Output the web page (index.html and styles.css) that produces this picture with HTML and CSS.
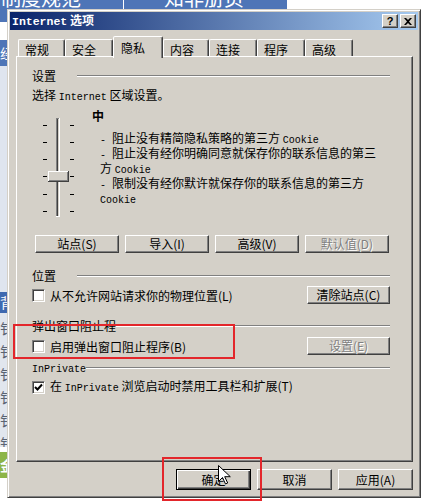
FILE: index.html
```html
<!DOCTYPE html>
<html lang="zh-CN">
<head>
  <meta charset="UTF-8">
  <meta name="viewport" content="width=device-width, initial-scale=1.0">
  <title>Internet 选项</title>
  <link rel="stylesheet" href="styles.css">
</head>
<body>

  <!-- page behind the dialog -->
  <div class="top-band">
    <span class="band-text band-left">制度规范</span>
    <span class="band-sep"></span>
    <span class="band-text band-right">知非册页</span>
  </div>

  <div class="desk">
    <div class="side-strip">
      <div class="strip s-blue-top"></div>
      <div class="strip s-white-a"></div>
      <div class="strip s-blue-mid">经</div>
      <div class="strip s-light"></div>
      <div class="strip s-blue-low">背</div>
      <div class="strip s-rows">钅<br>钅<br>钅<br>钅<br>钅<br>钅</div>
      <div class="strip s-white-b"></div>
      <div class="strip s-green">金</div>
    </div>

    <div class="dialog">
      <div class="title-bar">
        <span class="title-text"><span class="en-bold">Internet</span> 选项</span>
        <div class="cap-buttons">
          <span class="cap-btn cap-help">?</span>
          <span class="cap-btn">
            <svg width="8" height="7" viewBox="0 0 8 7"><path d="M0 0h2l2 2 2-2h2L5 3.5 8 7H6L4 5 2 7H0l3-3.5z" fill="#000"/></svg>
          </span>
        </div>
      </div>

      <div class="dialog-body">
        <div class="tabs">
          <div class="tab w47">常规</div>
          <div class="tab w48">安全</div>
          <div class="tab active">隐私</div>
          <div class="tab w46">内容</div>
          <div class="tab w48">连接</div>
          <div class="tab w48">程序</div>
          <div class="tab w48">高级</div>
        </div>

        <div class="panel">
          <div class="group-head"><span class="group-label">设置</span><span class="group-line"></span></div>
          <div class="zone-line">选择 <span class="en">Internet</span> 区域设置。</div>

          <div class="privacy">
            <svg class="slider" width="34" height="104" viewBox="0 0 34 104">
              <g fill="#000">
                <rect x="1" y="10" width="4" height="1"/><rect x="28" y="10" width="4" height="1"/>
                <rect x="1" y="27" width="4" height="1"/><rect x="28" y="27" width="4" height="1"/>
                <rect x="1" y="44" width="4" height="1"/><rect x="28" y="44" width="4" height="1"/>
                <rect x="1" y="61" width="4" height="1"/><rect x="28" y="61" width="4" height="1"/>
                <rect x="1" y="79" width="4" height="1"/><rect x="28" y="79" width="4" height="1"/>
                <rect x="1" y="96" width="4" height="1"/><rect x="28" y="96" width="4" height="1"/>
              </g>
              <rect x="14" y="3" width="4" height="99" fill="#fff"/>
              <rect x="14" y="3" width="3" height="98" fill="#808080"/>
              <rect x="15" y="4" width="2" height="97" fill="#404040"/>
              <rect x="16" y="4" width="1" height="97" fill="#d4d0c8"/>
              <rect x="6" y="56" width="21" height="11" fill="#404040"/>
              <rect x="6" y="56" width="20" height="10" fill="#fff"/>
              <rect x="7" y="57" width="19" height="9" fill="#808080"/>
              <rect x="7" y="57" width="18" height="8" fill="#d4d0c8"/>
            </svg>
            <div class="level">
              <div class="level-name">中</div>
              <div class="level-desc">
                <div><span class="en">- </span>阻止没有精简隐私策略的第三方 <span class="en">Cookie</span></div>
                <div><span class="en">- </span>阻止没有经你明确同意就保存你的联系信息的第三</div>
                <div>方 <span class="en">Cookie</span></div>
                <div><span class="en">- </span>限制没有经你默许就保存你的联系信息的第三方</div>
                <div><span class="en">Cookie</span></div>
              </div>
            </div>
          </div>

          <div class="btn-row">
            <button class="btn" type="button">站点(S)</button>
            <button class="btn" type="button">导入(I)</button>
            <button class="btn" type="button">高级(V)</button>
            <button class="btn off" type="button">默认值(D)</button>
          </div>

          <div class="group-head gap-loc"><span class="group-label">位置</span><span class="group-line"></span></div>
          <div class="check-row row-loc">
            <label class="check"><span class="box"></span><span>从不允许网站请求你的物理位置(L)</span></label>
            <button class="btn side" type="button">清除站点(C)</button>
          </div>

          <div class="group-head gap-popup"><span class="group-label">弹出窗口阻止程</span><span class="group-line"></span></div>
          <div class="check-row row-popup">
            <label class="check"><span class="box"></span><span>启用弹出窗口阻止程序(B)</span></label>
            <button class="btn side off" type="button">设置(E)</button>
          </div>

          <div class="group-head gap-private"><span class="group-label"><span class="en">InPrivate</span></span><span class="group-line"></span></div>
          <div class="check-row row-private">
            <label class="check">
              <span class="box">
                <svg width="9" height="9" viewBox="0 0 9 9"><path d="M1 4l2.5 2.5L8 1.5" fill="none" stroke="#000" stroke-width="2"/></svg>
              </span>
              <span>在 <span class="en">InPrivate</span> 浏览启动时禁用工具栏和扩展(T)</span>
            </label>
          </div>
        </div>

        <div class="dialog-buttons">
          <button class="btn wide default" type="button">确定</button>
          <button class="btn wide" type="button">取消</button>
          <button class="btn wide" type="button">应用(A)</button>
        </div>
      </div>
    </div>
  </div>

  <!-- annotations drawn over the screenshot -->
  <div class="mark mark-popup"></div>
  <div class="mark mark-ok"></div>
  <svg class="cursor" width="13" height="20" viewBox="0 0 13 20">
    <path d="M0.5 0.5v16l4-4 3 6.5 2.2-1-3-6.3h5.6z" fill="#fff" stroke="#000" stroke-width="1"/>
  </svg>

</body>
</html>
```

FILE: styles.css
```css
* {
  box-sizing: border-box;
}

body {
  margin: 0;
  width: 430px;
  height: 503px;
  overflow: hidden;
  position: relative;
  background: #fff;
  font-family: "Noto Sans CJK SC", sans-serif;
  font-size: 12px;
  color: #000;
}

.en {
  font-family: "Liberation Mono", "Noto Sans CJK SC", monospace;
  font-size: 10px;
}

.en-bold {
  font-family: "Liberation Mono", monospace;
  font-size: 11.5px;
  font-weight: bold;
}

/* background page */
.top-band {
  display: flex;
  width: 287px;
  height: 9px;
  overflow: hidden;
  background: #4e75b7;
  color: #fff;
  font-size: 20px;
  line-height: 20px;
}

.band-text {
  margin-top: -12px;
  white-space: nowrap;
}

.band-left {
  width: 123px;
  padding-left: 1px;
}

.band-sep {
  width: 1px;
  background: #fff;
}

.band-right {
  padding-left: 40px;
}

.desk {
  display: flex;
  height: 494px;
}

.side-strip {
  width: 7px;
  display: flex;
  flex-direction: column;
  overflow: hidden;
}

.strip {
  flex: none;
  overflow: hidden;
  font-size: 14px;
  white-space: nowrap;
}

.s-blue-top {
  height: 13px;
  background: #4e75b7;
}

.s-white-a {
  height: 18px;
  background: #fff;
}

.s-blue-mid {
  height: 26px;
  background: #4e75b7;
  color: #fff;
  line-height: 26px;
}

.s-light {
  height: 226px;
  background: #dfe5ef;
}

.s-blue-low {
  height: 21px;
  background: #3f69b0;
  color: #fff;
  line-height: 21px;
}

.s-rows {
  height: 134px;
  background: #e1e6ee;
  color: #5a6472;
  line-height: 23px;
  padding-top: 4px;
}

.s-white-b {
  height: 5px;
  background: #fff;
}

.s-green {
  height: 26px;
  background: #8db548;
  color: #fff;
  font-weight: bold;
  line-height: 26px;
}

/* dialog frame */
.dialog {
  width: 414px;
  height: 489px;
  padding: 2px;
  background: #d4d0c8;
  border: 1px solid;
  border-color: #d4d0c8 #404040 #404040 #d4d0c8;
  box-shadow: inset 1px 1px #fff, inset -1px -1px #808080;
}

.title-bar {
  display: flex;
  align-items: center;
  justify-content: space-between;
  height: 18px;
  padding: 0 2px;
  background: linear-gradient(90deg, #0a246a, #a6caf0);
  color: #fff;
}

.title-text {
  font-weight: bold;
  line-height: 14px;
}

.cap-buttons {
  display: flex;
  gap: 2px;
}

.cap-btn {
  display: flex;
  align-items: center;
  justify-content: center;
  width: 16px;
  height: 14px;
  background: #d4d0c8;
  border: 1px solid;
  border-color: #fff #404040 #404040 #fff;
  box-shadow: inset -1px -1px #808080;
}

.cap-help {
  font-family: "Liberation Sans", sans-serif;
  font-size: 11px;
  font-weight: bold;
  color: #000;
  line-height: 12px;
}

.dialog-body {
  padding: 6px 5px 0 6px;
}

/* tabs */
.tabs {
  display: flex;
  align-items: flex-end;
  height: 20px;
  padding-left: 2px;
}

.tab {
  height: 17px;
  padding: 4px 0 0 6px;
  border: 1px solid;
  border-bottom: none;
  border-color: #fff #404040 transparent #fff;
  border-radius: 2px 2px 0 0;
  box-shadow: inset -1px 0 #808080;
  line-height: 12px;
}

.w46 { width: 46px; }
.w47 { width: 47px; }
.w48 { width: 48px; }

.tab.active {
  position: relative;
  z-index: 1;
  width: 50px;
  height: 22px;
  margin-bottom: -2px;
  padding: 5px 0 0 7px;
  background: #d4d0c8;
}

.panel {
  height: 406px;
  padding: 12px 22px 0 15px;
  border: 1px solid;
  border-color: #fff #404040 #404040 #fff;
  box-shadow: inset -1px -1px #808080;
}

.group-head {
  display: flex;
  align-items: center;
  height: 13px;
  line-height: 13px;
}

.group-label {
  min-width: 45px;
  white-space: nowrap;
}

.group-line {
  flex: 1;
  height: 2px;
  border-top: 1px solid #808080;
  border-bottom: 1px solid #fff;
}

.zone-line {
  margin-top: 6px;
  line-height: 13px;
}

.privacy {
  display: flex;
  height: 110px;
  margin-top: 5px;
}

.slider {
  flex: none;
  margin: 6px 0 0 10px;
}

.level {
  margin-left: 16px;
}

.level-name {
  font-weight: bold;
  line-height: 13px;
}

.level-desc {
  margin-top: 10px;
  padding-left: 8px;
  line-height: 12px;
  white-space: nowrap;
}

/* buttons */
.btn {
  width: 84px;
  height: 18px;
  padding: 0;
  font: inherit;
  line-height: 14px;
  color: #000;
  background: #d4d0c8;
  border: 1px solid;
  border-color: #fff #404040 #404040 #fff;
  box-shadow: inset -1px -1px #808080;
}

.btn.off {
  color: #808080;
  text-shadow: 1px 1px #fff;
}

.btn.side {
  width: 83px;
}

.btn.wide {
  width: 75px;
  height: 21px;
}

.btn.default {
  border-color: #000;
  box-shadow: inset 1px 1px #fff, inset -1px -1px #404040, inset -2px -2px #808080;
}

.btn-row {
  display: flex;
  gap: 6px;
  margin-top: 16px;
  padding-left: 3px;
}

.gap-loc { margin-top: 16px; }
.gap-popup { margin-top: 15px; }
.gap-private { margin-top: 6px; }

.check-row {
  display: flex;
  align-items: center;
  justify-content: space-between;
  height: 18px;
}

.row-loc { margin-top: 4px; }
.row-popup { margin-top: 5px; }
.row-private { margin-top: 4px; }

.check {
  display: flex;
  align-items: center;
  gap: 5px;
  line-height: 13px;
  white-space: nowrap;
}

.box {
  display: flex;
  align-items: center;
  justify-content: center;
  width: 13px;
  height: 13px;
  background: #fff;
  border: 1px solid;
  border-color: #808080 #fff #fff #808080;
  box-shadow: inset 1px 1px #404040, inset -1px -1px #d4d0c8;
}

.dialog-buttons {
  display: flex;
  justify-content: flex-end;
  gap: 6px;
  margin-top: 7px;
}

/* red annotation boxes and mouse pointer */
.mark {
  position: absolute;
  border: 2px solid #e3262b;
}

.mark-popup {
  left: 13px;
  top: 324px;
  width: 222px;
  height: 35px;
}

.mark-ok {
  left: 162px;
  top: 457px;
  width: 100px;
  height: 44px;
}

.cursor {
  position: absolute;
  left: 218px;
  top: 465px;
}
```
